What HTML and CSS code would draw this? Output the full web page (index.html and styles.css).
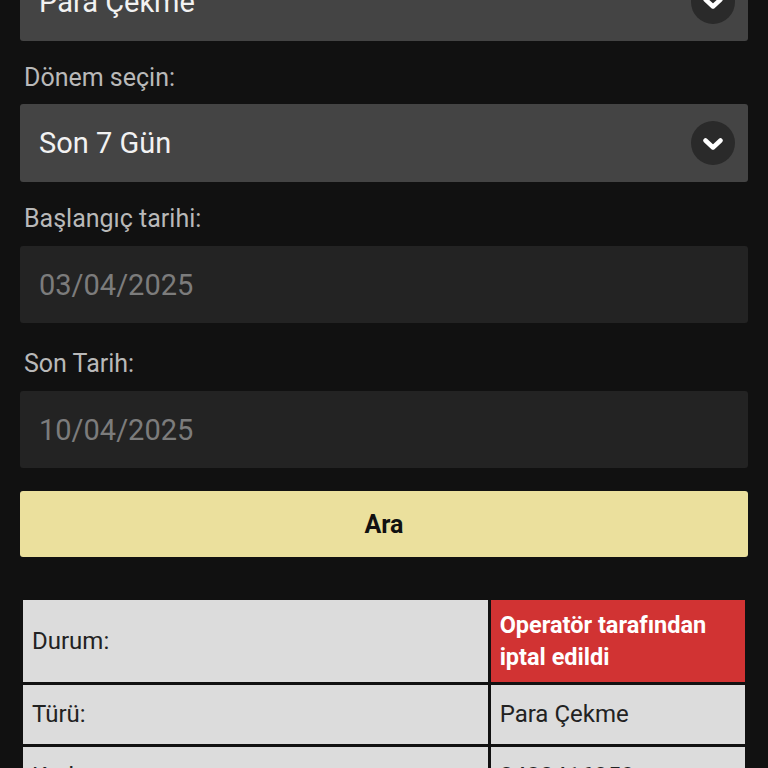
FILE: index.html
```html
<!DOCTYPE html>
<html lang="tr">

<head>
    <meta charset="UTF-8">
    <meta name="viewport" content="width=device-width, initial-scale=1.0">
    <title>İşlem Geçmişi</title>
    <link rel="stylesheet" href="styles.css">
</head>

<body>
    <div class="filters">
        <div class="select first">
            <span class="select-text">Para Çekme</span>
            <span class="chevron">
                <svg width="20" height="12" viewBox="0 0 20 12"><path d="M2.5 2.5 L10 9.5 L17.5 2.5" fill="none" stroke="#fff" stroke-width="4.5" stroke-linecap="round" stroke-linejoin="round"/></svg>
            </span>
        </div>

        <label class="label">Dönem seçin:</label>
        <div class="select">
            <span class="select-text">Son 7 Gün</span>
            <span class="chevron">
                <svg width="20" height="12" viewBox="0 0 20 12"><path d="M2.5 2.5 L10 9.5 L17.5 2.5" fill="none" stroke="#fff" stroke-width="4.5" stroke-linecap="round" stroke-linejoin="round"/></svg>
            </span>
        </div>

        <label class="label">Başlangıç tarihi:</label>
        <div class="date-input">03/04/2025</div>

        <label class="label">Son Tarih:</label>
        <div class="date-input">10/04/2025</div>

        <button class="search-btn">Ara</button>
    </div>

    <table class="result">
        <tr>
            <td class="key">Durum:</td>
            <td class="value status-cancelled">Operatör tarafından iptal edildi</td>
        </tr>
        <tr>
            <td class="key">Türü:</td>
            <td class="value">Para Çekme</td>
        </tr>
        <tr>
            <td class="key">Kod:</td>
            <td class="value">2482416359</td>
        </tr>
    </table>
</body>

</html>
```

FILE: styles.css
```css
body {
    font-family: Roboto, "Noto Sans", Arial, sans-serif;
    margin: 0;
    padding: 0 20px;
    background: #111111;
    color: #fff;
}

.filters {
    display: flex;
    flex-direction: column;
    margin-top: -37px;
}

.label {
    display: block;
    font-size: 25px;
    line-height: 28px;
    color: #b9b9b9;
    padding-left: 4px;
    margin: 23px 0 12px;
}

.select {
    height: 78px;
    background: #444444;
    border-radius: 3px;
    display: flex;
    align-items: center;
    justify-content: space-between;
    padding: 0 13px 0 19px;
    box-sizing: border-box;
}

.select-text {
    font-size: 29px;
    color: #f2f2f2;
}

.chevron {
    width: 44px;
    height: 44px;
    border-radius: 50%;
    background: #2a2a2a;
    display: flex;
    align-items: center;
    justify-content: center;
}

.chevron svg {
    margin-top: 1px;
}

.date-input {
    height: 77px;
    background: #232323;
    border-radius: 3px;
    display: flex;
    align-items: center;
    padding-left: 19px;
    font-size: 29px;
    color: #7c7c7c;
    margin-top: 1px;
    margin-bottom: 4px;
}

.search-btn {
    margin-top: 19px;
    height: 66px;
    background: #ebe09d;
    border: none;
    border-radius: 3px;
    font-family: inherit;
    font-size: 25px;
    font-weight: bold;
    color: #111;
}

.result {
    width: 728px;
    margin-top: 40px;
    border-spacing: 3px;
    font-size: 24px;
    color: #222;
}

.result td {
    background: #dcdcdc;
    padding: 13px 9px;
    line-height: 33px;
    vertical-align: middle;
}

.result .key {
    width: 446px;
}

.result .value {
    width: 236px;
}

.result .status-cancelled {
    background: #d13333;
    color: #fff;
    font-size: 23.5px;
    font-weight: bold;
    line-height: 32px;
    padding: 9px 9px;
}
```
